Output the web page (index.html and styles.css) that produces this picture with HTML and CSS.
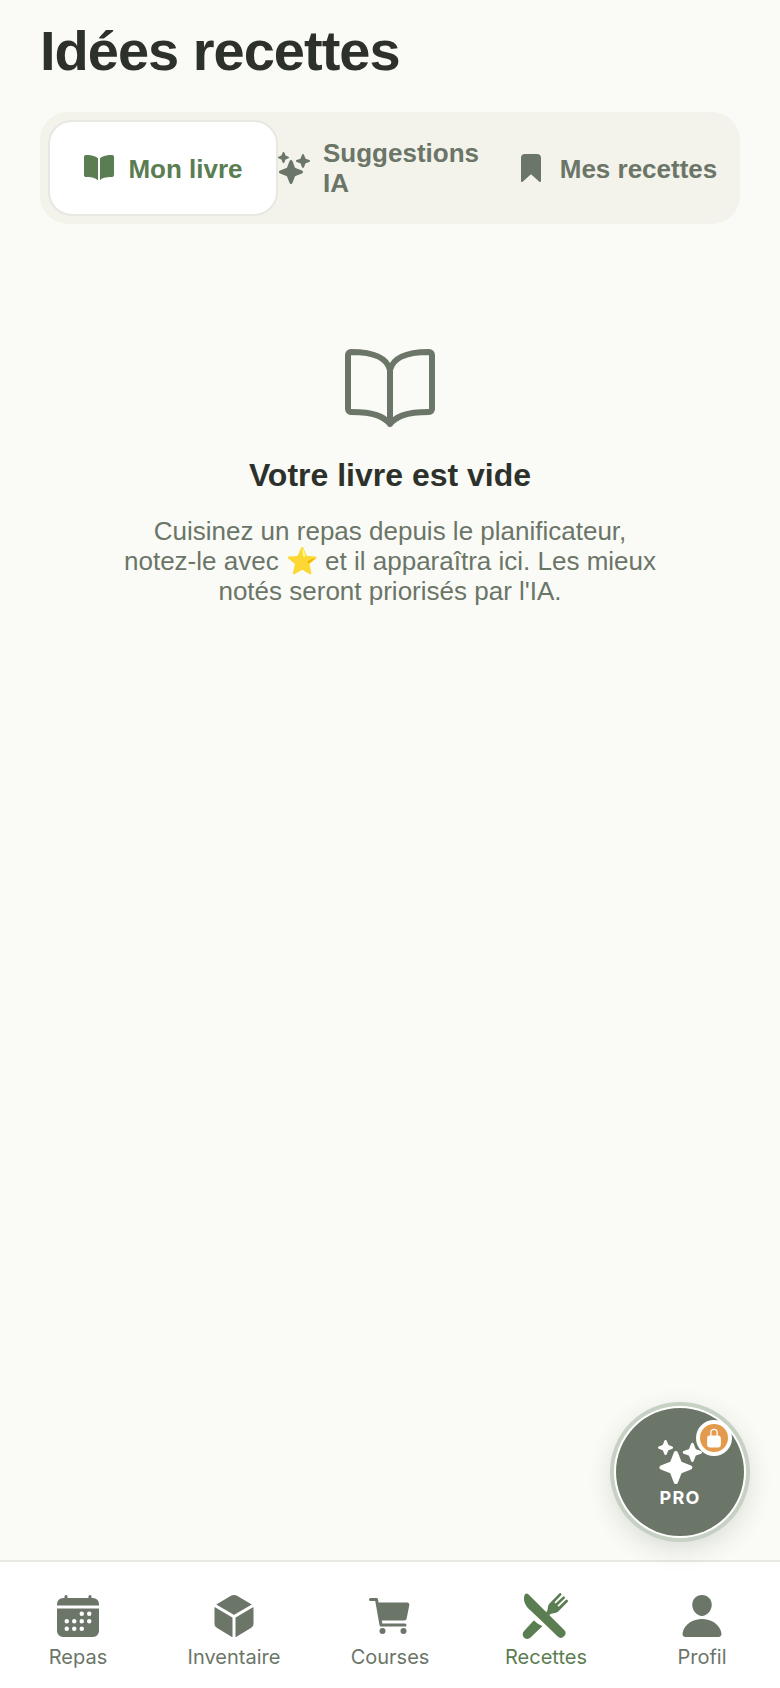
FILE: index.html
```html
<!DOCTYPE html>
<html lang="fr">
<head>
<meta charset="utf-8">
<title>Idées recettes</title>
<link rel="stylesheet" href="styles.css">
</head>
<body>
<div class="app">
  <main class="main">
    <h1 class="title">Idées recettes</h1>
    <div class="tabs">
      <div class="tab tab-active">
        <svg class="tab-icon" viewBox="0 0 512 512"><path d="M202.24 74C166.11 56.75 115.61 48.44 48 48a31.36 31.36 0 00-17.92 5.33A32 32 0 0016 79.9V366c0 19.34 13.76 33.93 32 33.93 71.07 0 142.36 6.64 185.06 47a4.11 4.11 0 006.94-3V106.82a15.89 15.89 0 00-5.46-12A143 143 0 00202.24 74zM481.92 53.3A31.33 31.33 0 00464 48c-67.61.44-118.11 8.75-154.24 26a143.31 143.31 0 00-32.31 20.78 15.93 15.93 0 00-5.45 12v337.13a3.93 3.93 0 006.68 2.81c25.67-25.5 70.72-46.82 185.36-46.81a32 32 0 0032-32v-288a32 32 0 00-14.12-26.61z"/></svg>
        <span class="tab-label tab-label-single">Mon livre</span>
      </div>
      <div class="tab">
        <svg class="tab-icon" viewBox="0 0 512 512"><path d="M208 512a24.84 24.84 0 01-23.34-16l-39.84-103.6a16.06 16.06 0 00-9.19-9.19L32 343.34a25 25 0 010-46.68l103.6-39.84a16.06 16.06 0 009.19-9.19L184.66 144a25 25 0 0146.68 0l39.84 103.6a16.06 16.06 0 009.19 9.19l103 39.63a25.49 25.49 0 0116.63 24.1 24.82 24.82 0 01-16 22.82l-103.6 39.84a16.06 16.06 0 00-9.19 9.19L231.34 496A24.84 24.84 0 01208 512zM88 176a14.67 14.67 0 01-13.69-9.4l-16.86-43.84a7.28 7.28 0 00-4.21-4.21L9.4 101.69a14.67 14.67 0 010-27.38l43.84-16.86a7.31 7.31 0 004.21-4.21L74.16 9.79A15 15 0 0186.23.11a14.67 14.67 0 0115.46 9.29l16.86 43.84a7.31 7.31 0 004.21 4.21l43.84 16.86a14.67 14.67 0 010 27.38l-43.84 16.86a7.28 7.28 0 00-4.21 4.21l-16.86 43.84A14.67 14.67 0 0188 176zM400 256a16 16 0 01-14.93-10.26l-22.84-59.37a8 8 0 00-4.6-4.6l-59.37-22.84a16 16 0 010-29.86l59.37-22.84a8 8 0 004.6-4.6l22.67-58.95a16.45 16.45 0 0113.17-10.57 16 16 0 0116.86 10.15l22.84 59.37a8 8 0 004.6 4.6l59.37 22.84a16 16 0 010 29.86l-59.37 22.84a8 8 0 00-4.6 4.6l-22.84 59.37A16 16 0 01400 256z"/></svg>
        <span class="tab-label">Suggestions IA</span>
      </div>
      <div class="tab">
        <svg class="tab-icon" viewBox="0 0 512 512"><path d="M400 480a16 16 0 01-10.63-4L256 357.41 122.63 476A16 16 0 0196 464V96a64.07 64.07 0 0164-64h192a64.07 64.07 0 0164 64v368a16 16 0 01-16 16z"/></svg>
        <span class="tab-label tab-label-single">Mes recettes</span>
      </div>
    </div>
    <section class="empty">
      <svg class="empty-icon" viewBox="0 0 512 512"><path d="M256 160c16-63.16 76.43-95.41 208-96a15.94 15.94 0 0116 16v288a16 16 0 01-16 16c-128 0-177.45 25.81-208 64-30.37-38-80-64-208-64-9.88 0-16-8.05-16-17.93V80a15.94 15.94 0 0116-16c131.57.59 192 32.84 208 96zM256 160v288"/></svg>
      <h2 class="empty-title">Votre livre est vide</h2>
      <p class="empty-text">Cuisinez un repas depuis le planificateur, notez-le avec ⭐ et il apparaîtra ici. Les mieux notés seront priorisés par l'IA.</p>
    </section>
  </main>

  <div class="fab">
    <svg class="fab-icon" viewBox="0 0 512 512"><path d="M208 512a24.84 24.84 0 01-23.34-16l-39.84-103.6a16.06 16.06 0 00-9.19-9.19L32 343.34a25 25 0 010-46.68l103.6-39.84a16.06 16.06 0 009.19-9.19L184.66 144a25 25 0 0146.68 0l39.84 103.6a16.06 16.06 0 009.19 9.19l103 39.63a25.49 25.49 0 0116.63 24.1 24.82 24.82 0 01-16 22.82l-103.6 39.84a16.06 16.06 0 00-9.19 9.19L231.34 496A24.84 24.84 0 01208 512zM88 176a14.67 14.67 0 01-13.69-9.4l-16.86-43.84a7.28 7.28 0 00-4.21-4.21L9.4 101.69a14.67 14.67 0 010-27.38l43.84-16.86a7.31 7.31 0 004.21-4.21L74.16 9.79A15 15 0 0186.23.11a14.67 14.67 0 0115.46 9.29l16.86 43.84a7.31 7.31 0 004.21 4.21l43.84 16.86a14.67 14.67 0 010 27.38l-43.84 16.86a7.28 7.28 0 00-4.21 4.21l-16.86 43.84A14.67 14.67 0 0188 176zM400 256a16 16 0 01-14.93-10.26l-22.84-59.37a8 8 0 00-4.6-4.6l-59.37-22.84a16 16 0 010-29.86l59.37-22.84a8 8 0 004.6-4.6l22.67-58.95a16.45 16.45 0 0113.17-10.57 16 16 0 0116.86 10.15l22.84 59.37a8 8 0 004.6 4.6l59.37 22.84a16 16 0 010 29.86l-59.37 22.84a8 8 0 00-4.6 4.6l-22.84 59.37A16 16 0 01400 256z"/></svg>
    <span class="fab-label">PRO</span>
    <span class="fab-badge">
      <svg class="badge-icon" viewBox="0 0 512 512"><path d="M368 192h-16v-80a96 96 0 10-192 0v80h-16a64.07 64.07 0 00-64 64v176a64.07 64.07 0 0064 64h224a64.07 64.07 0 0064-64V256a64.07 64.07 0 00-64-64zm-48 0H192v-80a64 64 0 11128 0z"/></svg>
    </span>
  </div>

  <nav class="nav">
    <div class="nav-item">
      <svg class="nav-icon" viewBox="0 0 512 512"><path d="M480 128a64 64 0 00-64-64h-16V48.45c0-8.61-6.62-16-15.23-16.43A16 16 0 00368 48v16H144V48.45c0-8.61-6.62-16-15.23-16.43A16 16 0 00112 48v16H96a64 64 0 00-64 64v12a4 4 0 004 4h440a4 4 0 004-4zM32 416a64 64 0 0064 64h320a64 64 0 0064-64V179a3 3 0 00-3-3H35a3 3 0 00-3 3zm344-208a24 24 0 11-24 24 24 24 0 0124-24zm0 80a24 24 0 11-24 24 24 24 0 0124-24zm-80-80a24 24 0 11-24 24 24 24 0 0124-24zm0 80a24 24 0 11-24 24 24 24 0 0124-24zm0 80a24 24 0 11-24 24 24 24 0 0124-24zm-80-80a24 24 0 11-24 24 24 24 0 0124-24zm0 80a24 24 0 11-24 24 24 24 0 0124-24zm-80-80a24 24 0 11-24 24 24 24 0 0124-24zm0 80a24 24 0 11-24 24 24 24 0 0124-24z"/></svg>
      <span class="nav-label">Repas</span>
    </div>
    <div class="nav-item">
      <svg class="nav-icon" viewBox="0 0 512 512"><path d="M440.9 136.3a4 4 0 000-6.91L288.16 40.65a64.14 64.14 0 00-64.33 0L71.12 129.39a4 4 0 000 6.91L254 243.88a4 4 0 004.06 0zM54 163.51a4 4 0 00-6 3.49v173.89a48 48 0 0023.84 41.39L234 479.51a4 4 0 006-3.46V274.3a4 4 0 00-2-3.46zM272 275v201a4 4 0 006 3.46l162.15-97.23A48 48 0 00464 340.89V167a4 4 0 00-6-3.45l-184 108a4 4 0 00-2 3.45z"/></svg>
      <span class="nav-label">Inventaire</span>
    </div>
    <div class="nav-item">
      <svg class="nav-icon" viewBox="0 0 512 512"><circle cx="176" cy="416" r="32"/><circle cx="400" cy="416" r="32"/><path d="M456.8 120.78a23.92 23.92 0 00-18.56-8.78H133.89l-6.13-34.78A16 16 0 00112 64H48a16 16 0 000 32h50.58l45.66 258.78A16 16 0 00160 368h256a16 16 0 000-32H173.42l-5.64-32h241.66A24.07 24.07 0 00433 284.71l28.8-144a24 24 0 00-5-19.93z"/></svg>
      <span class="nav-label">Courses</span>
    </div>
    <div class="nav-item nav-item-active">
      <svg class="nav-icon" viewBox="0 0 48 48">
        <path d="M3 2.2c1-1 2.3-1 3.3 0L42.2 38a4.6 4.6 0 0 1-6.5 6.5L21.5 30.8 8 18C2.5 13 .5 7 3 2.2z"/>
        <path d="M11 29.2l1.2-.7c2.2 2.6 5 4.6 8.3 5.4L8.6 45.6a4.7 4.7 0 0 1-6.7-.2 4.6 4.6 0 0 1 .2-6.4z"/>
        <path d="M23.8 20.5c1.4-1.2 1.8-2.6 2-4.6.2-2 .8-3.6 2.2-5L37.2 1.4a1.3 1.3 0 0 1 1.9 1.8l-6.4 6.9c-.4.5.7 1.6 1.2 1.2l6.9-6.6a1.3 1.3 0 0 1 1.8 1.9l-6.9 6.6c-.4.5.7 1.6 1.2 1.2l6.9-6.4a1.3 1.3 0 0 1 1.8 1.9l-8.9 9.1c-1.4 1.4-3 2-5 2.2-2 .2-3.4.7-4.6 2z"/>
      </svg>
      <span class="nav-label">Recettes</span>
    </div>
    <div class="nav-item">
      <svg class="nav-icon" viewBox="0 0 512 512"><path d="M332.64 64.58C313.18 43.57 286 32 256 32c-30.16 0-57.43 11.5-76.8 32.38-19.58 21.11-29.12 49.8-26.88 80.78C156.76 206.28 203.27 256 256 256s99.16-49.71 103.67-110.82c2.27-30.7-7.33-59.33-27.03-80.6zM432 480H80a31 31 0 01-24.2-11.13c-6.5-7.77-9.12-18.38-7.18-29.11C57.06 392.94 83.4 353.61 124.8 326c36.78-24.51 83.37-38 131.2-38s94.42 13.5 131.2 38c41.4 27.6 67.74 66.93 76.18 113.75 1.94 10.73-.68 21.34-7.18 29.11A31 31 0 01432 480z"/></svg>
      <span class="nav-label">Profil</span>
    </div>
  </nav>
</div>
</body>
</html>
```

FILE: styles.css
```css
* { box-sizing: border-box; }
html, body { margin: 0; padding: 0; }
body {
  width: 780px;
  height: 1688px;
  overflow: hidden;
  background: #fafbf6;
  font-family: "Liberation Sans", Arial, sans-serif;
}
.app {
  position: relative;
  display: flex;
  flex-direction: column;
  height: 1688px;
}
.main {
  flex: 1;
  min-height: 0;
  padding: 17px 40px 0;
}
.title {
  margin: 0;
  font-size: 56px;
  line-height: 68px;
  font-weight: 700;
  letter-spacing: -1px;
  color: #2d312b;
}
.tabs {
  display: grid;
  grid-template-columns: 230px 222px 232px;
  height: 112px;
  margin-top: 27px;
  padding: 8px;
  border-radius: 28px;
  background: #f3f3ec;
}
.tab {
  min-width: 0;
  display: flex;
  align-items: center;
  justify-content: center;
  gap: 13px;
  border-radius: 24px;
  color: #6b7568;
  fill: #6b7568;
}
.tab-active {
  border: 2px solid #e8e8e2;
  background: #ffffff;
  color: #5a7d52;
  fill: #5a7d52;
}
.tab-icon {
  flex: none;
  width: 32px;
  height: 32px;
}
.tab-label {
  min-width: 0;
  font-size: 26px;
  line-height: 30px;
  font-weight: 700;
}
.tab-label-single {
  padding-top: 2px;
}
.empty {
  display: flex;
  flex-direction: column;
  align-items: center;
  padding-top: 116px;
}
.empty-icon {
  width: 96px;
  height: 96px;
  fill: none;
  stroke: #6b7568;
  stroke-width: 32;
  stroke-linejoin: round;
  stroke-linecap: round;
}
.empty-title {
  margin: 17px 0 0;
  font-size: 32px;
  line-height: 44px;
  font-weight: 700;
  color: #2d312b;
}
.empty-text {
  width: 540px;
  margin: 19px 0 0;
  font-size: 26px;
  line-height: 30px;
  text-align: center;
  color: #6b7568;
}
.fab {
  position: absolute;
  left: 616px;
  top: 1408px;
  width: 128px;
  height: 128px;
  display: flex;
  flex-direction: column;
  align-items: center;
  justify-content: center;
  padding-top: 5px;
  border-radius: 50%;
  background: #6b7568;
  box-shadow: 0 0 0 2px #ffffff, 0 0 0 6px #c6d0c3, 0 8px 24px 6px rgba(45, 49, 43, 0.14);
  fill: #ffffff;
}
.fab-icon {
  width: 44px;
  height: 44px;
}
.fab-label {
  margin-top: 3px;
  font-family: Inter, sans-serif;
  font-size: 18px;
  line-height: 22px;
  font-weight: 700;
  letter-spacing: 1.2px;
  color: #ffffff;
}
.fab-badge {
  position: absolute;
  left: 80px;
  top: 12px;
  width: 36px;
  height: 36px;
  display: flex;
  align-items: center;
  justify-content: center;
  border: 4px solid #ffffff;
  border-radius: 50%;
  background: #e39a4c;
}
.badge-icon {
  width: 20px;
  height: 20px;
  fill: #ffffff;
}
.nav {
  flex: none;
  display: flex;
  height: 128px;
  padding-top: 30px;
  border-top: 2px solid #e8e8e2;
  background: #ffffff;
}
.nav-item {
  flex: 1 1 0;
  display: flex;
  flex-direction: column;
  align-items: center;
  color: #6b7568;
  fill: #6b7568;
}
.nav-item-active {
  color: #5a7d52;
  fill: #5a7d52;
}
.nav-icon {
  width: 48px;
  height: 48px;
}
.nav-label {
  margin-top: 3px;
  font-family: Inter, sans-serif;
  font-size: 20px;
  line-height: 28px;
}
```
